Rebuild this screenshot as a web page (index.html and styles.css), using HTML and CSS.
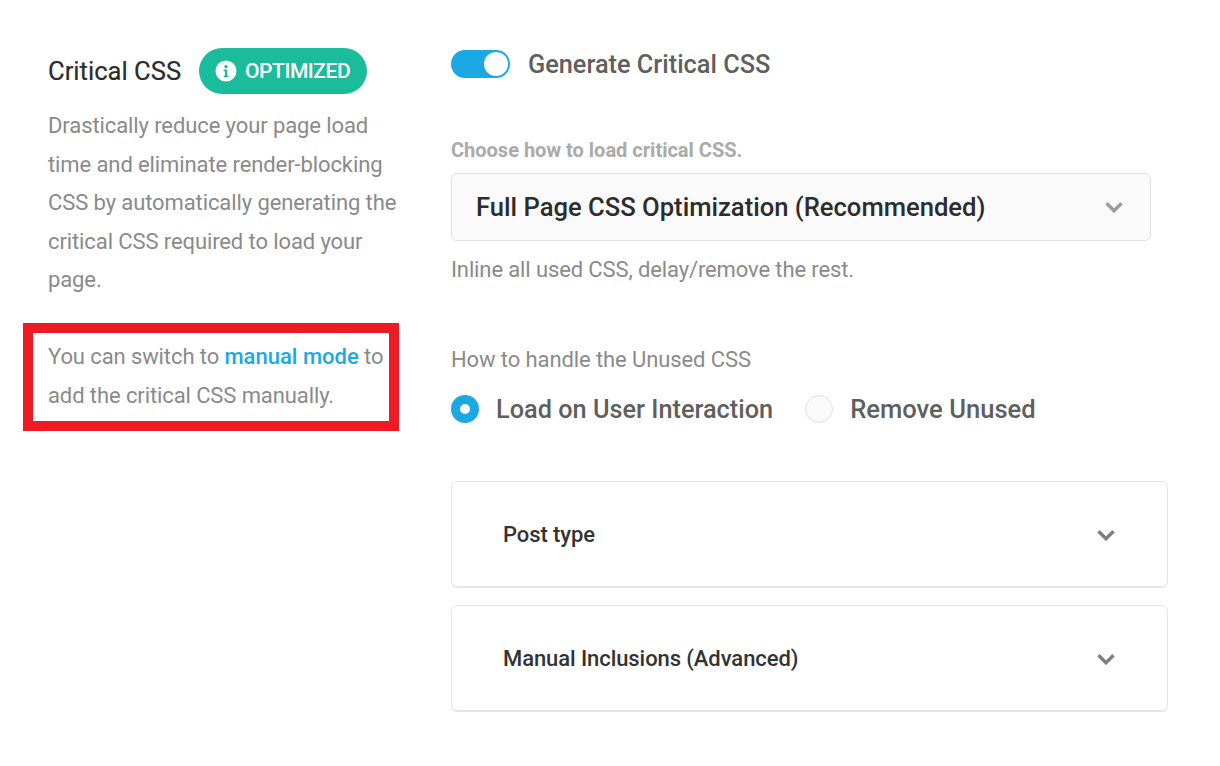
FILE: index.html
```html
<!DOCTYPE html>
<html lang="en">
<head>
<meta charset="utf-8">
<title>Critical CSS</title>
<link rel="stylesheet" href="styles.css">
</head>
<body>
<div class="page">
  <aside class="intro">
    <div class="heading">
      <h2 class="title">Critical CSS</h2>
      <span class="badge">
        <svg class="badge-icon" viewBox="0 0 22 22"><circle cx="11" cy="11" r="10.5" fill="#fff"/><circle cx="11" cy="6.6" r="1.7" fill="#1bbc9b"/><path d="M8.6 9.6h3.6v6h1.2v1.6H8.8v-1.6h1.1v-4.4H8.6z" fill="#1bbc9b"/></svg>
        OPTIMIZED
      </span>
    </div>
    <p class="desc">Drastically reduce your page load time and eliminate render-blocking CSS by automatically generating the critical CSS required to load your page.</p>
    <p class="desc note">You can switch to <a class="link" href="#">manual mode</a> to add the critical CSS manually.</p>
    <div class="highlight"></div>
  </aside>
  <main class="settings">
    <div class="toggle-row">
      <span class="toggle"><span class="knob"></span></span>
      <span class="toggle-label">Generate Critical CSS</span>
    </div>
    <div class="field-label">Choose how to load critical CSS.</div>
    <div class="select">
      <span>Full Page CSS Optimization (Recommended)</span>
      <svg class="chev chev-light" viewBox="0 0 18 12"><path d="M1.5 2.2L9 9.7l7.5-7.5" fill="none" stroke="currentColor" stroke-width="3.4"/></svg>
    </div>
    <div class="hint">Inline all used CSS, delay/remove the rest.</div>
    <div class="radio-title">How to handle the Unused CSS</div>
    <div class="radios">
      <span class="radio-item"><span class="radio on"></span>Load on User Interaction</span>
      <span class="radio-item radio-alt"><span class="radio"></span>Remove Unused</span>
    </div>
    <div class="panel first">
      <span>Post type</span>
      <svg class="chev" viewBox="0 0 18 12"><path d="M1.5 2.2L9 9.7l7.5-7.5" fill="none" stroke="currentColor" stroke-width="3.4"/></svg>
    </div>
    <div class="panel">
      <span>Manual Inclusions (Advanced)</span>
      <svg class="chev" viewBox="0 0 18 12"><path d="M1.5 2.2L9 9.7l7.5-7.5" fill="none" stroke="currentColor" stroke-width="3.4"/></svg>
    </div>
  </main>
</div>
</body>
</html>
```

FILE: styles.css
```css
* { box-sizing: border-box; }
html, body { margin: 0; padding: 0; background: #fff; }
body { font-family: Roboto, "Liberation Sans", sans-serif; width: 1220px; height: 766px; overflow: hidden; }
.page { display: flex; padding: 48px 52px 0 48px; }
.intro { position: relative; width: 403px; flex: none; }
.heading { display: flex; align-items: center; gap: 18px; height: 46px; margin-bottom: 13px; }
.title { margin: 0; font-size: 25.6px; font-weight: 400; color: #2c2c2c; -webkit-text-stroke: 0.2px #2c2c2c; }
.badge { display: flex; align-items: center; gap: 8px; width: 168px; height: 46px; padding: 0 0 0 16px; border-radius: 23px; background: #1bbc9b; color: #fff; font-size: 21px; letter-spacing: -0.45px; font-weight: 500; white-space: nowrap; }
.badge-icon { width: 22px; height: 22px; }
.desc { margin: 0; width: 352px; font-size: 22px; letter-spacing: -0.1px; line-height: 38.6px; color: #8a8a8a; }
.note { margin-top: 38px; }
.link { color: #1ba8e3; font-weight: 500; text-decoration: none; letter-spacing: 0; }
.highlight { position: absolute; left: -25px; top: 275px; width: 376px; height: 108px; border: 10px solid #ed1c24; }
.settings { flex: 1; }
.toggle-row { display: flex; align-items: center; gap: 18px; height: 32px; }
.toggle { display: flex; justify-content: flex-end; width: 59px; height: 28px; padding: 2px; border-radius: 14px; background: #1ba8e3; }
.knob { width: 24px; height: 24px; border-radius: 50%; background: #fff; }
.toggle-label { font-size: 25.3px; font-weight: 500; color: #5f5f5f; }
.field-label { margin-top: 56px; font-size: 20px; font-weight: 700; color: #aaa; line-height: 28px; }
.select { display: flex; align-items: center; justify-content: space-between; width: 700px; height: 68px; margin-top: 9px; padding: 0 27px 0 24px; border: 1px solid #e0e0e0; border-radius: 6px; background: #fafafa; font-size: 25.6px; font-weight: 500; color: #2c2c2c; }
.chev { width: 18px; height: 12px; color: #7f7f80; }
.chev-light { color: #9a9a9a; }
.hint { margin-top: 14px; font-size: 22px; letter-spacing: -0.12px; line-height: 30px; color: #8a8a8a; }
.radio-title { margin-top: 60px; font-size: 22px; letter-spacing: -0.1px; line-height: 30px; color: #8a8a8a; }
.radios { display: flex; gap: 32px; margin-top: 14px; height: 40px; align-items: center; }
.radio-item { display: flex; align-items: center; gap: 17px; font-size: 25.3px; font-weight: 500; color: #5f5f5f; }
.radio-alt { font-size: 25.6px; }
.radio { width: 28px; height: 28px; border-radius: 50%; border: 1px solid #e0e0e0; background: #fafafa; }
.radio.on { border: 9px solid #1ba8e3; background: #fff; }
.panel { display: flex; align-items: center; justify-content: space-between; height: 107px; margin-top: 17px; padding: 1px 52px 0 51px; border: 1px solid #e6e6e6; border-bottom-width: 2px; border-radius: 6px; background: #fff; font-size: 22px; letter-spacing: -0.08px; font-weight: 500; color: #333; }
.panel.first { margin-top: 52px; }
```
